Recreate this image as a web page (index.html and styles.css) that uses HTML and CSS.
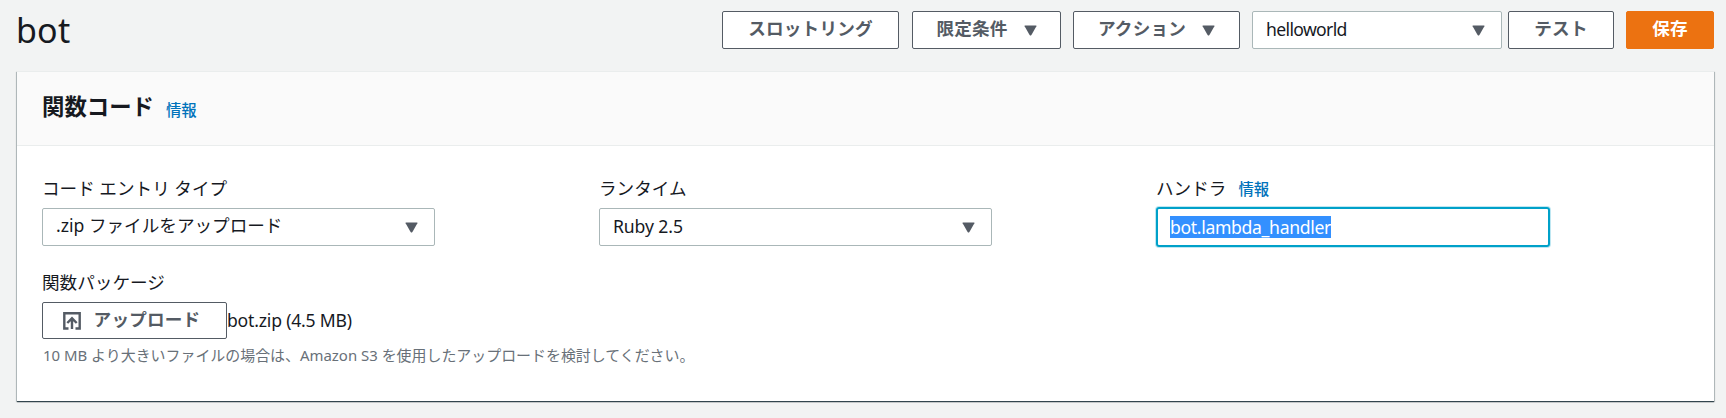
FILE: index.html
```html
<!DOCTYPE html>
<html lang="ja">
<head>
<meta charset="utf-8">
<title>bot</title>
<link rel="stylesheet" href="styles.css">
</head>
<body>
<header class="topbar">
  <h1 class="title">bot</h1>
  <div class="actions">
    <button class="btn throttle"><span class="jp">スロットリング</span></button>
    <button class="btn qualifier"><span class="jp">限定条件</span><svg class="caret" viewBox="0 0 13 11"><path d="M1 .5h11q.8 0 .4.8L7.4 10q-.9 1-1.8 0L.6 1.300Q.2.500 1 .5z"/></svg></button>
    <button class="btn action"><span class="jp">アクション</span><svg class="caret" viewBox="0 0 13 11"><path d="M1 .5h11q.8 0 .4.8L7.4 10q-.9 1-1.8 0L.6 1.300Q.2.500 1 .5z"/></svg></button>
    <div class="select event"><span class="latin hello">helloworld</span><svg class="caret" viewBox="0 0 13 11"><path d="M1 .5h11q.8 0 .4.8L7.4 10q-.9 1-1.8 0L.6 1.300Q.2.500 1 .5z"/></svg></div>
    <button class="btn test"><span class="jp">テスト</span></button>
    <button class="btn primary"><span class="jp">保存</span></button>
  </div>
</header>
<main class="panel">
  <div class="panel-head">
    <h2 class="heading">関数コード</h2>
    <a class="info">情報</a>
  </div>
  <div class="panel-body">
    <div class="fields">
      <div class="field">
        <div class="label">コード エントリ タイプ</div>
        <div class="select"><span class="jp">.zip ファイルをアップロード</span><svg class="caret" viewBox="0 0 13 11"><path d="M1 .5h11q.8 0 .4.8L7.4 10q-.9 1-1.8 0L.6 1.300Q.2.500 1 .5z"/></svg></div>
      </div>
      <div class="field">
        <div class="label">ランタイム</div>
        <div class="select"><span class="latin runtime">Ruby 2.5</span><svg class="caret" viewBox="0 0 13 11"><path d="M1 .5h11q.8 0 .4.8L7.4 10q-.9 1-1.8 0L.6 1.300Q.2.500 1 .5z"/></svg></div>
      </div>
      <div class="field">
        <div class="label">ハンドラ<a class="info">情報</a></div>
        <div class="input"><span class="selected">bot.lambda_handler</span></div>
      </div>
    </div>
    <div class="package">
      <div class="label">関数パッケージ</div>
      <div class="upload-row">
        <button class="btn upload"><svg class="upload-icon" viewBox="0 0 18 18"><path d="M5.500 16.500H1.300V1.300h15.400v15.200h-4.200M9 17V6.500M4.300 11 9 6.300l4.700 4.700"/></svg><span class="jp">アップロード</span></button>
        <span class="filename">bot.zip (4.5 MB)</span>
      </div>
      <div class="hint">10 MB より大きいファイルの場合は、Amazon S3 を使用したアップロードを検討してください。</div>
    </div>
  </div>
</main>
</body>
</html>
```
FILE: styles.css
```css
* { box-sizing: border-box; }
body {
  margin: 0;
  height: 418px;
  overflow: hidden;
  background: #f2f3f3;
  color: #16191f;
  font: 17.6px/24px "Noto Sans", "Noto Sans CJK JP", sans-serif;
}
.topbar {
  display: flex;
  justify-content: space-between;
  height: 71px;
  padding: 11px 12px 0 16px;
}
.title { margin: 0; font-size: 34px; font-weight: 400; line-height: 38px; letter-spacing: .2px; }
.actions { display: flex; height: 38px; }
.btn {
  display: flex;
  align-items: center;
  justify-content: center;
  height: 38px;
  padding: 0;
  border: 1px solid #545b64;
  border-radius: 2px;
  background: #fff;
  color: #545b64;
  font: inherit;
  font-weight: 700;
  white-space: nowrap;
}
.jp { padding-bottom: 4px; }
.btn .jp { padding-bottom: 5px; letter-spacing: .2px; }
.caret { width: 13px; height: 11px; fill: #545b64; flex: none; }
.throttle { width: 177px; margin-right: 13px; }
.qualifier { width: 149px; margin-right: 12px; }
.action { width: 167px; margin-right: 12px; }
.btn .caret { margin-left: 16px; }
.test { width: 106px; margin: 0 12px 0 6px; }
.primary { width: 88px; border-color: #ec7211; background: #ec7211; color: #fff; }
.select {
  display: flex;
  align-items: center;
  justify-content: space-between;
  width: 393px;
  height: 38px;
  padding: 0 16px 0 13px;
  border: 1px solid #aab7b8;
  border-radius: 2px;
  background: #fff;
}
.event { width: 250px; }
.latin { padding-bottom: 2px; }
.hello { padding-bottom: 3px; letter-spacing: -.65px; }
.runtime { letter-spacing: -.1px; }
.panel {
  width: 1697px;
  height: 330px;
  margin-left: 17px;
  background: #fff;
  box-shadow: 0 1px 1px 0 rgba(0, 28, 36, .3), 1px 1px 1px 0 rgba(0, 28, 36, .15), -1px 1px 1px 0 rgba(0, 28, 36, .15), 0 1px 1px 0 #687078;
}
.panel-head {
  display: flex;
  align-items: baseline;
  height: 75px;
  padding: 19px 25px 0;
  border-top: 1px solid #eaeded;
  border-bottom: 1px solid #eaeded;
  background: #fafafa;
}
.heading { margin: 0; font-size: 22.4px; line-height: 32px; }
.info { margin-left: 12px; color: #0073bb; font-size: 15.4px; font-weight: 500; }
.panel-head .info { position: relative; top: 1px; }
.panel-body { padding: 30px 25px 0; }
.fields { display: grid; grid-template-columns: 557px 557px 395px; height: 94px; }
.label { height: 32px; line-height: 24px; white-space: nowrap; }
.label .info { margin-left: 12px; }
.input {
  display: flex;
  align-items: center;
  width: 394px;
  height: 40px;
  margin-top: -1px;
  padding-left: 12px;
  border: 2px solid #00a1c9;
  border-radius: 3px;
  box-shadow: 0 0 0 1px #bfe7f2;
}
.selected { height: 22px; line-height: 22px; letter-spacing: -.33px; background: #3390ff; color: #fff; }
.upload-row { display: flex; align-items: center; height: 37px; }
.upload { width: 185px; height: 37px; padding-right: 6px; }
.btn.upload .jp { padding-bottom: 4px; }
.upload-icon { width: 18px; height: 18px; margin-right: 13px; fill: none; stroke: #545b64; stroke-width: 2.400; }
.filename { letter-spacing: -.2px; padding-bottom: 1px; }
.hint { margin-top: 4px; padding-left: 1px; color: #687078; font-size: 14.95px; white-space: nowrap; }
```
